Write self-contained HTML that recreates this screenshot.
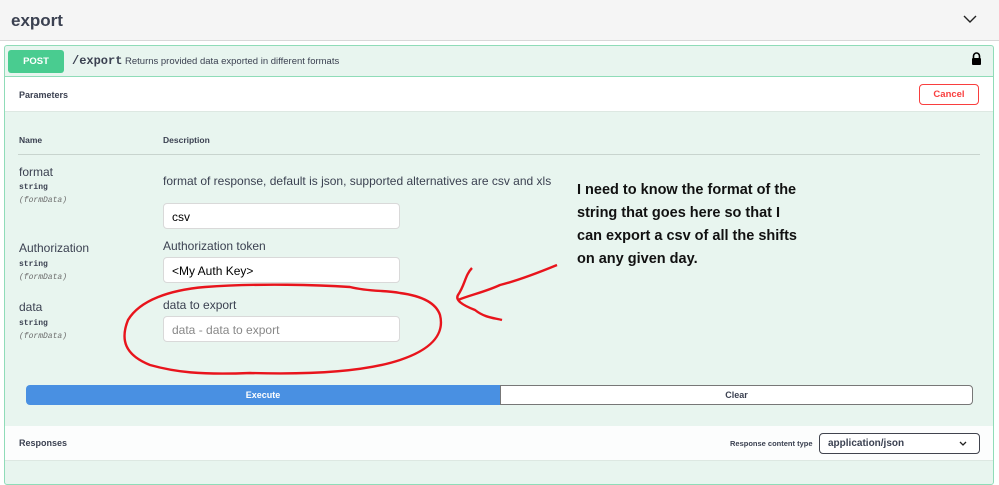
<!DOCTYPE html>
<html><head><style>
*{box-sizing:border-box;margin:0;padding:0}
body{width:999px;height:478px;overflow:hidden;background:#fff;font-family:"Liberation Sans",sans-serif;color:#3b4151;position:relative}
.abs{position:absolute}
.mono{font-family:"Liberation Mono",monospace}
.inp{position:absolute;left:163px;width:237px;height:26px;background:#fff;border:1px solid #d9d9d9;border-radius:4px;font-size:12px;padding:6px 8px;color:#000}
.nm{position:absolute;left:19px;font-size:12px;color:#3b4151}
.ty{position:absolute;left:19px;font-size:8px;font-weight:bold;font-family:"Liberation Mono",monospace}
.fd{position:absolute;left:19px;font-size:8px;font-style:italic;color:#6b6b6b;font-family:"Liberation Mono",monospace}
</style></head><body>
<div class="abs" style="left:0;top:0;width:999px;height:41px;background:#f5f5f5;border-bottom:1px solid #d8d8d8"></div>
<div class="abs" style="left:11px;top:11px;font-size:17px;font-weight:bold;color:#3b4151">export</div>
<svg class="abs" style="left:963px;top:14px" width="14" height="10"><path d="M1 2 L7 8 L13 2" fill="none" stroke="#222" stroke-width="1.4"/></svg>
<div class="abs" style="left:4px;top:45px;width:990px;height:440px;background:#e8f5ef;border:1px solid #8fdcb8;border-radius:3px"></div>
<div class="abs" style="left:5px;top:76px;width:988px;height:1px;background:#8fdcb8"></div>
<div class="abs" style="left:8px;top:50px;width:56px;height:23px;background:#49cc90;border-radius:3px;color:#fff;font-size:9.5px;font-weight:bold;text-align:center;line-height:23px">POST</div>
<div class="abs mono" style="left:72px;top:54px;font-size:12px;font-weight:bold;color:#3b4151">/export</div>
<div class="abs" style="left:125px;top:56px;font-size:9.5px;color:#3b4151">Returns provided data exported in different formats</div>
<svg class="abs" style="left:971px;top:52px" width="11" height="14"><path d="M2.5 6 V4 a3 3 0 0 1 6 0 V6" fill="none" stroke="#000" stroke-width="1.6"/><rect x="1" y="6" width="9" height="7" rx="1" fill="#000"/></svg>
<div class="abs" style="left:5px;top:77px;width:988px;height:35px;background:#fff;border-bottom:1px solid #dde8e2"></div>
<div class="abs" style="left:19px;top:90px;font-size:9px;font-weight:bold">Parameters</div>
<div class="abs" style="left:919px;top:84px;width:60px;height:21px;border:1.5px solid #f93e3e;border-radius:4px;color:#f93e3e;font-size:9.5px;font-weight:bold;text-align:center;line-height:19px;background:#fff">Cancel</div>
<div class="abs" style="left:19px;top:135px;font-size:8.5px;font-weight:bold">Name</div>
<div class="abs" style="left:163px;top:135px;font-size:8.5px;font-weight:bold">Description</div>
<div class="abs" style="left:18px;top:154px;width:962px;height:1px;background:#c8d4ce"></div>
<div class="nm" style="top:165px">format</div>
<div class="ty" style="top:183px">string</div>
<div class="fd" style="top:196px">(formData)</div>
<div class="abs" style="left:163px;top:174px;font-size:12px">format of response, default is json, supported alternatives are csv and xls</div>
<div class="inp" style="top:203px">csv</div>
<div class="nm" style="top:241px">Authorization</div>
<div class="ty" style="top:260px">string</div>
<div class="fd" style="top:273px">(formData)</div>
<div class="abs" style="left:163px;top:239px;font-size:12px">Authorization token</div>
<div class="inp" style="top:257px">&lt;My Auth Key&gt;</div>
<div class="nm" style="top:300px">data</div>
<div class="ty" style="top:319px">string</div>
<div class="fd" style="top:332px">(formData)</div>
<div class="abs" style="left:163px;top:298px;font-size:12px">data to export</div>
<div class="inp" style="top:316px;color:#888">data - data to export</div>
<div class="abs" style="left:577px;top:179px;font-size:14.5px;font-weight:bold;color:#111;line-height:23px;width:232px">I need to know the format of the string that goes here so that I can export a csv of all the shifts on any given day.</div>
<svg class="abs" style="left:0;top:0" width="999" height="478"><g fill="none" stroke="#e8141c" stroke-width="2.4" stroke-linejoin="round"><path d="M205 287 C170 290 140 300 128 320 C120 340 125 355 150 365 C175 372 200 375 250 373 C320 375 370 370 400 360 C430 350 445 335 440 315 C435 300 415 295 400 293 C385 290 370 292 350 287 C320 285 260 283 205 287Z"/><path d="M472 268 C465 275 465 285 458 295 C455 300 462 305 475 310 C485 318 495 318 502 320"/><path d="M458 300 C470 295 485 292 500 285 C520 280 540 272 557 265"/></g></svg>
<div class="abs" style="left:26px;top:385px;width:474px;height:20px;background:#4990e2;border-radius:4px 0 0 4px;color:#fff;font-size:9px;font-weight:bold;text-align:center;line-height:20px">Execute</div>
<div class="abs" style="left:500px;top:385px;width:473px;height:20px;background:#fff;border:1px solid #777;border-radius:0 4px 4px 0;font-size:9px;font-weight:bold;text-align:center;line-height:18px">Clear</div>
<div class="abs" style="left:5px;top:426px;width:988px;height:35px;background:#fcfdfd;border-bottom:1px solid #dde8e2"></div>
<div class="abs" style="left:19px;top:438px;font-size:9px;font-weight:bold">Responses</div>
<div class="abs" style="left:730px;top:439px;font-size:7.5px;font-weight:bold">Response content type</div>
<div class="abs" style="left:819px;top:433px;width:161px;height:21px;background:#fff;border:1.5px solid #41444e;border-radius:4px;font-size:10px;font-weight:bold;padding:4px 8px;line-height:12px">application/json</div>
<svg class="abs" style="left:959px;top:441px" width="8" height="6"><path d="M1 1 L4 4 L7 1" fill="none" stroke="#222" stroke-width="1.3"/></svg>
</body></html>
